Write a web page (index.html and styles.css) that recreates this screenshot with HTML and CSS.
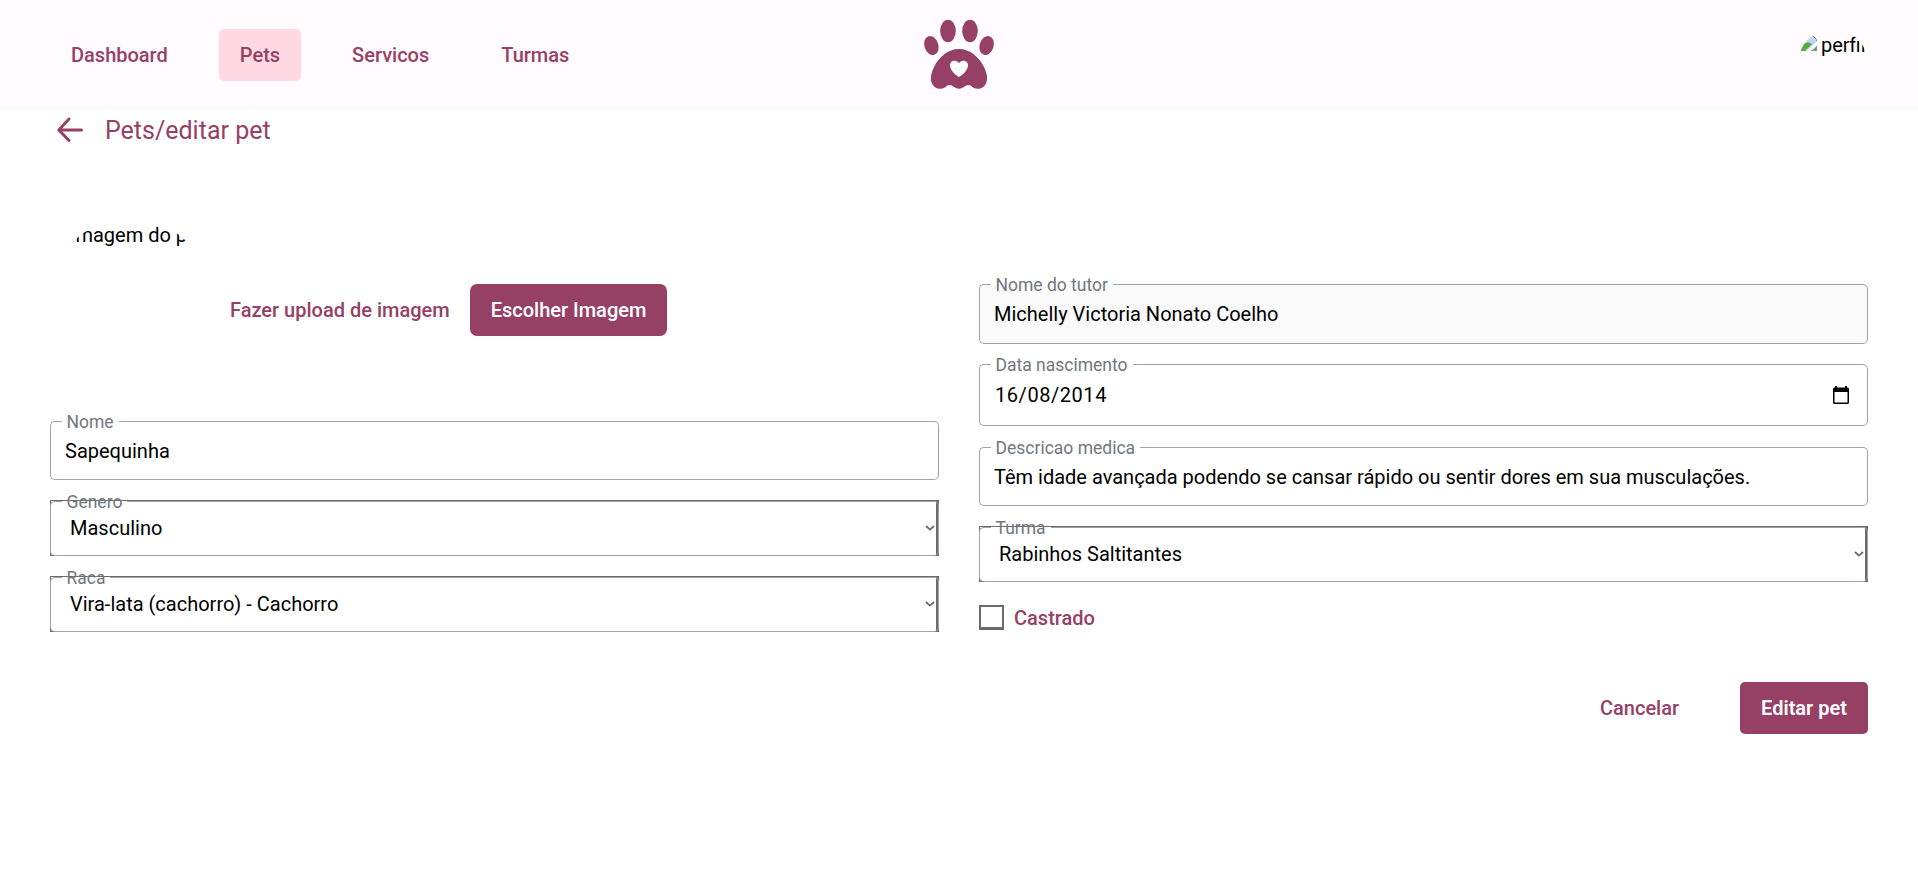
FILE: index.html
```html
<!DOCTYPE html>
<html lang="pt-BR">
<head>
<meta charset="utf-8">
<title>Editar pet</title>
<link rel="stylesheet" href="styles.css">
</head>
<body>
<header class="header">
  <nav class="nav">
    <a class="nav-link">Dashboard</a>
    <a class="nav-link active">Pets</a>
    <a class="nav-link">Servicos</a>
    <a class="nav-link">Turmas</a>
  </nav>
  <svg class="logo" width="70" height="70" viewBox="0 0 70 70">
    <g fill="#964066">
      <ellipse cx="24" cy="11" rx="7.8" ry="11.2"/>
      <ellipse cx="46" cy="11" rx="7.8" ry="11.2"/>
      <ellipse cx="7.4" cy="25.5" rx="7" ry="9.8" transform="rotate(-17 7.4 25.5)"/>
      <ellipse cx="62.6" cy="25.5" rx="7" ry="9.8" transform="rotate(17 62.6 25.5)"/>
      <path d="M35 29C46 29 55 37 60 47C62.500 52 64 58 62.500 62C60.500 68.500 54 70 50 68C47.500 66.500 47 65 44.500 65C41 65 39.500 68.700 35 68.700C30.500 68.700 29 65 25.500 65C23 65 22.500 66.500 20 68C16 70 9.500 68.500 7.500 62C6 58 7.500 52 10 47C15 37 24 29 35 29Z"/>
    </g>
    <path fill="#fff" d="M35 57C32 55.500 26 50 26 45.500C26 42 28.500 40.800 30.500 40.800C32.500 40.800 34 42 35 43.200C36 42 37.500 40.800 39.500 40.800C41.500 40.800 44 42 44 45.500C44 50 38 55.500 35 57Z"/>
  </svg>
  <div class="avatar">
    <svg width="16" height="16" viewBox="0 0 16 16"><path d="M0 0H11L16 5V16H0Z" fill="#c3d5f7"/><path d="M0 16V12Q5 5 11 9L4 16Z" fill="#55ae3b"/><path d="M11 16L16 11V16Z" fill="#55ae3b"/><path d="M5.500 16L16 6.500V10L10 16Z" fill="#fff"/><path d="M0 .5H11.500L15.500 4.500V6M15.500 11V15.500H10" fill="none" stroke="#8b8b8b"/></svg>
    <span class="alt">perfil</span>
  </div>
</header>
<main class="page">
  <div class="crumb">
    <svg class="back" width="28" height="28" viewBox="0 0 28 28" fill="none" stroke="#964066" stroke-width="3" stroke-linecap="round" stroke-linejoin="round"><path d="M25.500 14H3M13 3L2.800 14L13 24.500"/></svg>
    <h1 class="title">Pets/editar pet</h1>
  </div>
  <form class="columns">
    <section class="col">
      <div class="upload">
        <div class="photo"><span class="alt">Imagem do pet</span></div>
        <span class="upload-label">Fazer upload de imagem</span>
        <span class="btn choose">Escolher Imagem</span>
      </div>
      <div class="field nome"><div class="value">Sapequinha</div><div class="outline"><span>Nome</span></div></div>
      <div class="field select"><div class="value">Masculino</div><svg class="chev" width="10" height="6" viewBox="0 0 10 6"><path d="M1 1L5 4.600L9 1"/></svg><div class="outline"><span>Genero</span></div></div>
      <div class="field select"><div class="value">Vira-lata (cachorro) - Cachorro</div><svg class="chev" width="10" height="6" viewBox="0 0 10 6"><path d="M1 1L5 4.600L9 1"/></svg><div class="outline"><span>Raca</span></div></div>
    </section>
    <section class="col right">
      <div class="field tutor"><div class="value">Michelly Victoria Nonato Coelho</div><div class="outline"><span>Nome do tutor</span></div></div>
      <div class="field date"><div class="value">16/08/2014</div>
        <svg class="cal" width="16" height="18" viewBox="0 0 16 18"><path d="M0 3Q0 1.500 1.500 1.500H2V0H4V1.500H12V0H14V1.500H14.500Q16 1.500 16 3V16.500Q16 18 14.500 18H1.500Q0 18 0 16.500ZM1.500 6V16.500H14.500V6Z" fill-rule="evenodd"/></svg>
        <div class="outline"><span>Data nascimento</span></div></div>
      <div class="field desc"><div class="value">Têm idade avançada podendo se cansar rápido ou sentir dores em sua musculações.</div><div class="outline"><span>Descricao medica</span></div></div>
      <div class="field select"><div class="value">Rabinhos Saltitantes</div><svg class="chev" width="10" height="6" viewBox="0 0 10 6"><path d="M1 1L5 4.600L9 1"/></svg><div class="outline"><span>Turma</span></div></div>
      <div class="check"><i class="box"></i><span>Castrado</span></div>
    </section>
  </form>
  <footer class="actions"><span class="btn text">Cancelar</span><span class="btn submit">Editar pet</span></footer>
</main>
</body>
</html>
```
FILE: styles.css
```css
* { box-sizing: border-box; }
body { margin: 0; background: #fff; color: #000; font: 400 20px/24px Roboto, sans-serif; }
.header { height: 110px; background: #fffbff; display: grid; grid-template-columns: 1fr 70px 1fr; align-items: center; padding: 0 50px; }
.nav { display: flex; gap: 30px; }
.nav-link { height: 52px; padding: 0 21px; border-radius: 5px; line-height: 52px; font-weight: 500; color: #964066; }
.active { background: #ffd9e2; }
.logo { display: block; overflow: visible; margin-top: -1px; }
.avatar { justify-self: end; align-self: start; width: 70px; height: 70px; margin-top: 29px; border-radius: 50%; overflow: hidden; display: flex; align-items: flex-start; gap: 4px; padding: 6px 0 0 3px; white-space: nowrap; }
.avatar svg { flex: none; }
.photo { flex: none; width: 160px; height: 160px; margin-top: 1px; border-radius: 50%; overflow: hidden; padding: 5px 0 0 20px; white-space: nowrap; }
.avatar .alt { line-height: 20px; }
.page { padding: 6px 50px 0; }
.crumb { display: flex; align-items: center; gap: 21px; height: 29px; padding-left: 6px; }
.back { margin-top: -2px; }
.title { margin: 0; font-size: 25px; line-height: 29px; font-weight: 400; color: #964066; }
.columns { display: grid; grid-template-columns: 1fr 1fr; gap: 40px; padding-top: 72px; }
.col { display: flex; flex-direction: column; gap: 20px; }
.right { padding-top: 67px; }
.upload { display: flex; align-items: flex-start; height: 184px; gap: 20px; }
.upload-label { margin-top: 81px; font-weight: 500; color: #964066; }
.btn { height: 52px; padding: 0 21px; border-radius: 5px; background: #964066; color: #fff; line-height: 52px; font-weight: 500; }
.choose { margin-top: 67px; border-radius: 7px; }
.submit { font-weight: 600; }
.field { position: relative; display: flex; align-items: center; justify-content: space-between; height: 60px; padding: 0 15px; border-radius: 5px; }
.nome { height: 59px; }
.tutor { background: #fafafa; }
.date { height: 62px; padding: 0 19px 0 16px; }
.date .value { letter-spacing: .55px; }
.desc { height: 59px; margin-top: 1px; }
.select { height: 56px; border: solid #6b6b6b; border-width: 1px 3px 1px 1px; border-radius: 0; padding: 0 1px 0 19px; }
.chev { fill: none; stroke: #6b6b6b; stroke-width: 1.8; }
.outline { position: absolute; inset: 0; display: flex; font-size: 17.5px; line-height: 22px; color: #707780; pointer-events: none; }
.select .outline { inset: 0 -3px -1px -1px; }
.outline::before, .outline::after { content: ""; border: 1px solid #9ca3af; }
.outline::before { width: 11px; border-right: 0; border-radius: 5px 0 0 5px; }
.outline::after { flex: 1; border-left: 0; border-radius: 0 5px 5px 0; }
.outline span { padding: 0 5px 0 4.5px; margin-top: -10px; border-bottom: 1px solid #9ca3af; }
.check { display: flex; align-items: center; gap: 10px; margin-top: 3px; font-weight: 500; color: #964066; }
.box { width: 25px; height: 25px; border: solid #6b6b6b; border-width: 2px 2px 3px; background: #fff; }
.actions { display: flex; justify-content: flex-end; gap: 40px; padding-top: 50px; }
.text { background: none; color: #964066; }
```
